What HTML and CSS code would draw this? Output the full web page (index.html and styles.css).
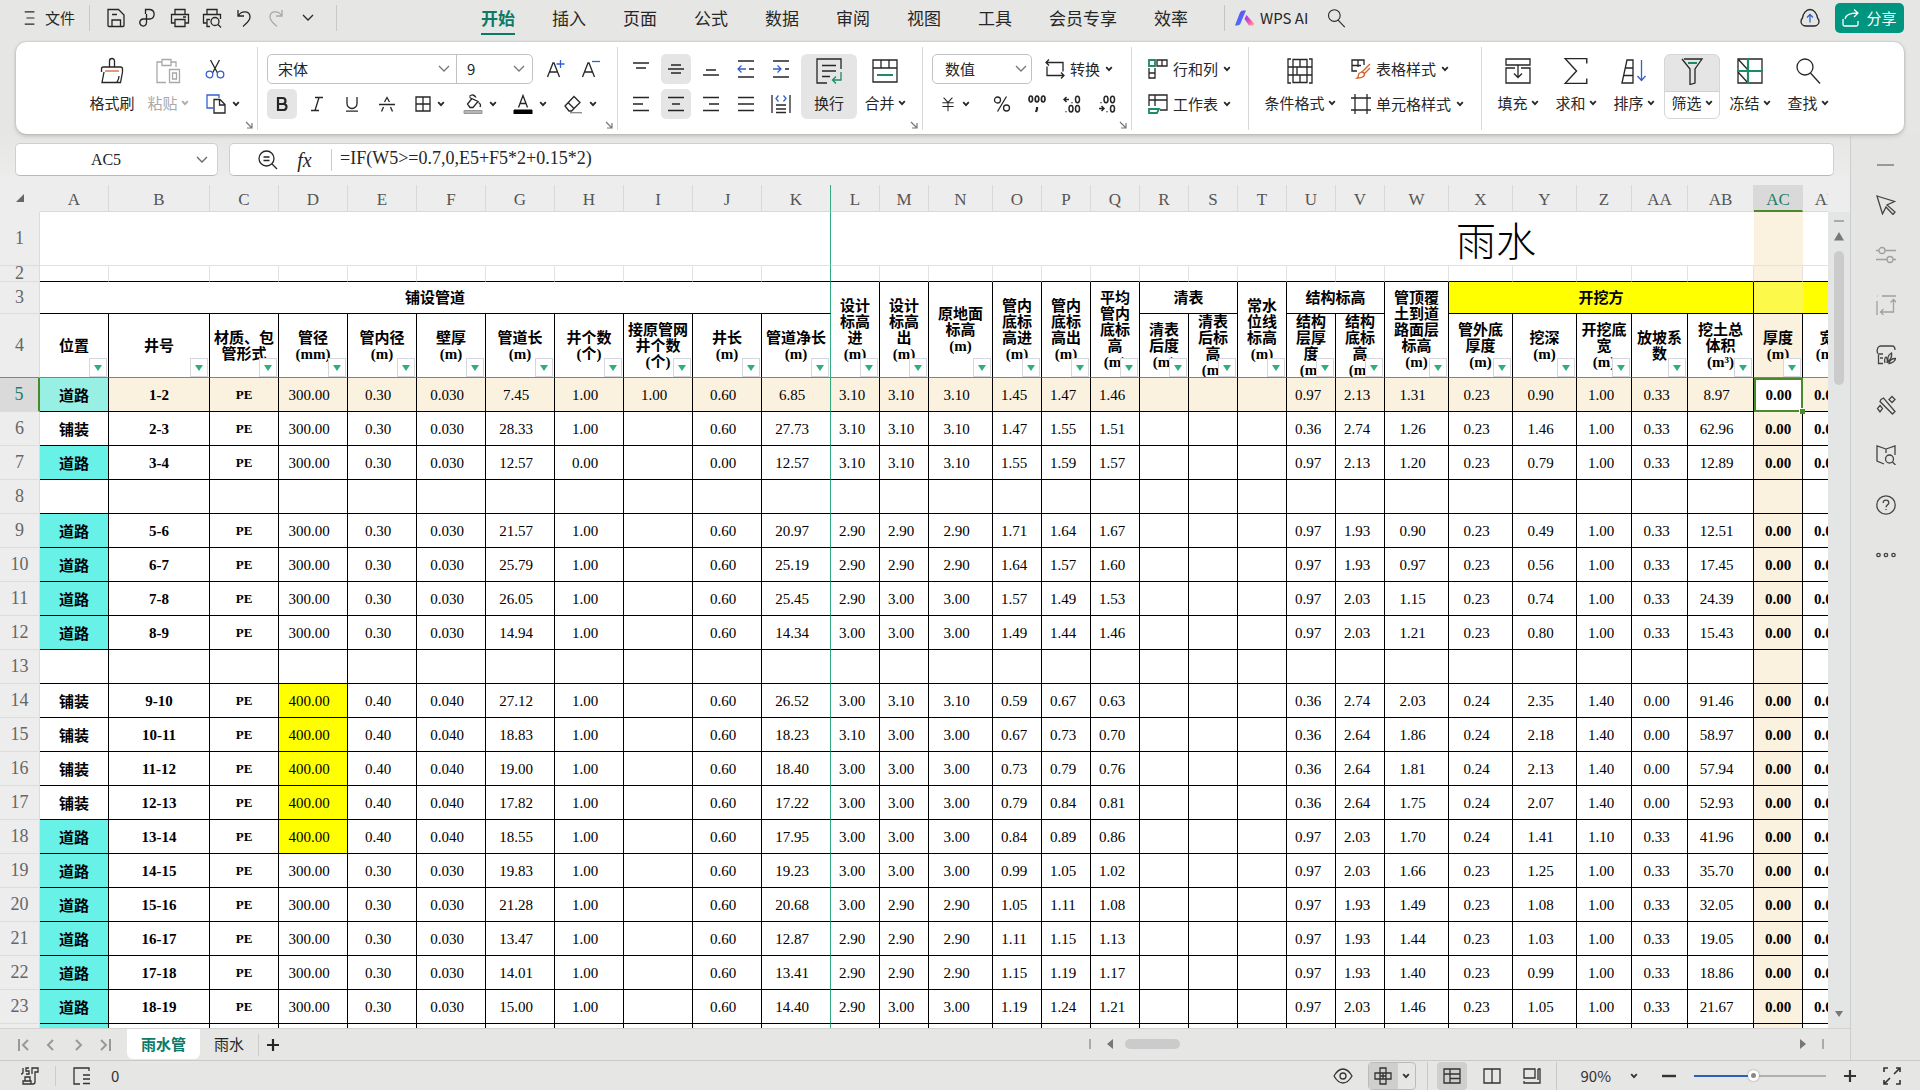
FILE: index.html
```html
<!DOCTYPE html>
<html lang="zh-CN">
<head>
<meta charset="utf-8">
<title>雨水管 - WPS 表格</title>
<link rel="stylesheet" href="styles.css">
</head>
<body>
<svg class="sprite" aria-hidden="true">
  <defs>
    <linearGradient id="ai-blue" x1="0" y1="0" x2="1" y2="1"><stop offset="0" stop-color="#7a3cf0"/><stop offset="1" stop-color="#2f8cff"/></linearGradient>
    <linearGradient id="ai-pink" x1="0" y1="0" x2="1" y2="1"><stop offset="0" stop-color="#8c2bf0"/><stop offset=".6" stop-color="#f25bb0"/><stop offset="1" stop-color="#ffb29a"/></linearGradient>
  </defs>
  <symbol id="chev" viewBox="0 0 8 6"><path d="M1.2 1.2 4 4.2 6.8 1.2" stroke-width="1.8"/></symbol>
  <symbol id="chev-thin" viewBox="0 0 12 8"><path d="M1 1l5 5 5-5"/></symbol>
  <symbol id="launch" viewBox="0 0 8 8"><path d="M1 1l6 6M7 2v5H2" stroke-width="1.2"/></symbol>
  <symbol id="menu" viewBox="0 0 12 16"><path d="M0 1h11M2 8h9M0 15h11"/></symbol>
  <symbol id="save" viewBox="0 0 20 20"><path d="M2 1.500h10.500l5.500 5.500v10.500a1 1 0 0 1-1 1H3a1 1 0 0 1-1-1zM6 18v-6h8.500v6M6 6.500h5"/></symbol>
  <symbol id="pdf" viewBox="0 0 20 20"><path d="M7.500 6V1.500h4.500a4.800 4.800 0 0 1 0 9.500H5a3.500 3.500 0 0 0-1.500 6.500C6 19 8.500 17 8.500 14.500V6"/></symbol>
  <symbol id="print" viewBox="0 0 20 20"><path d="M5 6V1.500h10V6M5 15H1.500V6.500h17V15H15M5 11.500h10v7H5zM13 9h3"/></symbol>
  <symbol id="preview" viewBox="0 0 20 20"><path d="M5 6V1.500h10V6M5 15H1.500V6.500h17V11M8 18.500H5v-7h3"/><circle cx="13" cy="13.500" r="4"/><path d="M16 16.500l3 3"/></symbol>
  <symbol id="undo" viewBox="0 0 20 20"><path d="M4 2v6h6M4.500 7.500C8 2 16 3 16 9c0 4-3 5.500-7 9.500"/></symbol>
  <symbol id="redo" viewBox="0 0 20 20"><path d="M16 2v6h-6M15.500 7.500C12 2 4 3 4 9c0 4 3 5.500 7 9.500"/></symbol>
  <symbol id="search" viewBox="0 0 24 24"><circle cx="10" cy="9" r="7"/><path d="M14.500 14.500l8 8.500"/></symbol>
  <symbol id="ai" viewBox="0 0 20 16"><path d="M0 15.500 5 2.500Q6 .5 8 .5h3L5.500 13.500Q4.700 15.500 2.500 15.500z" fill="url(#ai-blue)" stroke="none"/><path d="M11.500 5 19 13.500Q19.500 15.500 18 15.500h-4L9.500 9z" fill="url(#ai-pink)" stroke="none"/></symbol>
  <symbol id="cloud" viewBox="0 0 20 20"><path d="M5.500 18A4.600 4.600 0 0 1 1 13.500C1 12 1.500 11 2.500 10 3 5.500 6 1.500 10 1.500S17 5.500 17.500 10c1 1 1.500 2 1.500 3.500A4.600 4.600 0 0 1 14.500 18z"/><path d="M10 14.500V7M7 9.500 10 6.500l3 3" stroke="#3360d0"/></symbol>
  <symbol id="share" viewBox="0 0 18 18"><path d="M1 10v5.500q0 1.500 1.500 1.500h12q1.500 0 1.500-1.500V12M3 10c1-5 6-6 12-6M12 .5 16 4l-4 4"/></symbol>
  <symbol id="brush" viewBox="0 0 26 28"><path d="M10.500 10V4a2.500 2.500 0 0 1 5 0v6M2.500 15v-3q0-2 2-2h17q2 0 2 2v3M5 15 3 25.500h18.500L23.500 15M18 25q2-3 2-6"/><path d="M6 14h14" stroke="#d2622a"/></symbol>
  <symbol id="paste" viewBox="0 0 26 28"><path d="M7 5H2v20.500h9M16 5h5v5M7 2.500h9v6H7z"/><path d="M14.500 12.500h10v13h-10zM17.500 16h4v6h-4z"/></symbol>
  <symbol id="cut" viewBox="0 0 20 20"><path d="M5.500 1l7 13M14.500 1l-7 13"/><circle cx="4.500" cy="15.500" r="3.300" stroke="#3360d0"/><circle cx="15.500" cy="15.500" r="3.300" stroke="#3360d0"/></symbol>
  <symbol id="copy" viewBox="0 0 20 20"><path d="M13 4V1H1v13h6" stroke="#3360d0"/><path d="M8 5.500h6l5 5v8.500H8zM13.500 5.500v5.500H19"/></symbol>
  <symbol id="a-up" viewBox="0 0 20 20"><path d="M1.500 18 7 4h1l5.500 14M3.500 13h8"/><path d="M14.500 1v8M10.500 5h8" stroke="#3360d0"/></symbol>
  <symbol id="a-down" viewBox="0 0 20 20"><path d="M1.500 18 7 4h1l5.500 14M3.500 13h8"/><path d="M11 2.500h8" stroke="#3360d0"/></symbol>
  <symbol id="bold" viewBox="0 0 16 16"><path d="M4 2h4.500a3 3 0 0 1 0 6H4zM4 8h5.500a3 3 0 0 1 0 6H4z" stroke-width="2.200"/></symbol>
  <symbol id="italic" viewBox="0 0 16 16"><path d="M6 1.500h8M2 14.500h8M10 1.500 6 14.500"/></symbol>
  <symbol id="under" viewBox="0 0 16 16"><path d="M3 1v6.500a5 5 0 0 0 10 0V1M2 15.200h12"/></symbol>
  <symbol id="strike" viewBox="0 0 16 16"><path d="M0 8.500h16M5.500 6 8 1.500 10.500 6M4.500 11 2.500 15.500M11.500 11l2 4.500"/></symbol>
  <symbol id="border" viewBox="0 0 16 16"><path d="M1 1h14v14H1zM8 1v14M1 8h14"/></symbol>
  <symbol id="fill" viewBox="0 0 20 20"><path d="M6.500 2.500Q10-1 13 3.500M6.500 3.500 15 7.500l-5 6H7L4.500 10 9 4.500M15.500 8.500q3 2 1.500 4.500"/><path d="M1 16.500h18v3H1z" fill="#b5b5b5" stroke="#999" stroke-width="1"/></symbol>
  <symbol id="fcolor" viewBox="0 0 20 20"><path d="M5.500 13.500 10 1.500l4.500 12M7 9.500h6"/><path d="M1 16h18v4H1z" fill="#000" stroke="#000" stroke-width="1"/></symbol>
  <symbol id="eraser" viewBox="0 0 20 20"><path d="M2 12 11 2.500l6 6L8.500 17H6zM5 8.500l6 6"/><path d="M7 18.700h12" stroke="#888"/></symbol>
  <symbol id="al-top" viewBox="0 0 16 16"><path d="M0 2h16M3 7h10"/></symbol>
  <symbol id="al-mid" viewBox="0 0 16 16"><path d="M3 4h10M0 8h16M3 12h10"/></symbol>
  <symbol id="al-bot" viewBox="0 0 16 16"><path d="M3 9h10M0 14h16"/></symbol>
  <symbol id="ind-l" viewBox="0 0 18 18"><path d="M1 1h16M1 17h16M12 9h5"/><path d="M1 9h8M4.500 5.500 1 9l3.500 3.500" stroke="#3360d0"/></symbol>
  <symbol id="ind-r" viewBox="0 0 18 18"><path d="M1 1h16M1 17h16M13 9h4"/><path d="M1 9h8M5.500 5.500 9 9l-3.500 3.500" stroke="#3360d0"/></symbol>
  <symbol id="left" viewBox="0 0 16 16"><path d="M0 1.500h16M0 8h10M0 14.500h16"/></symbol>
  <symbol id="center" viewBox="0 0 16 16"><path d="M0 1.500h16M4 8h8M0 14.500h16"/></symbol>
  <symbol id="right" viewBox="0 0 16 16"><path d="M0 1.500h16M6 8h10M0 14.500h16"/></symbol>
  <symbol id="just" viewBox="0 0 16 16"><path d="M0 1.500h16M0 8h16M0 14.500h16"/></symbol>
  <symbol id="dist" viewBox="0 0 20 20"><path d="M1 1v18M19 1v18M5 11h10M5 15h10M5 18.500h10"/><path d="M7.500 1.500 5 4.500l2.500 3M12.500 1.500l2.500 3-2.500 3" stroke="#3360d0"/></symbol>
  <symbol id="wrap" viewBox="0 0 26 26"><path d="M11 25H1V1h24v10M6 7.500h14M6 13h14M6 18.500h8"/><path d="M25 14v8h-8M20 18.500 16.500 22l3.500 3.500" stroke="#1d8a68"/></symbol>
  <symbol id="merge" viewBox="0 0 26 24"><path d="M1 1h24v22H1zM1 9h24M9 1v8M17 1v8"/><path d="M5 16h16" stroke="#1d8a68" stroke-width="2"/></symbol>
  <symbol id="convert" viewBox="0 0 20 20"><path d="M4 .5 1 3.500l3 3M1 3.500h17v9M16 13.500l3 3-3 3M19 16.500H2v-9"/></symbol>
  <symbol id="yen" viewBox="0 0 16 20"><path d="M2.500 2 8 8l5.500-6M1 8.500h14M1 13h14M8 8v11"/></symbol>
  <symbol id="percent" viewBox="0 0 18 18"><circle cx="4.500" cy="5" r="3"/><circle cx="13.500" cy="13" r="3"/><path d="M13.500 1.500l-9 15"/></symbol>
  <symbol id="thousand" viewBox="0 0 18 18"><g stroke-width="1.700"><ellipse cx="2.800" cy="4" rx="1.800" ry="3"/><ellipse cx="9" cy="4" rx="1.800" ry="3"/><ellipse cx="15.200" cy="4" rx="1.800" ry="3"/><path d="M9 12v2l-1 3" stroke-width="2.200"/></g></symbol>
  <symbol id="dec-inc" viewBox="0 0 18 18"><g stroke-width="1.500"><path d="M1 4.500h5M3.500 2 1 4.500 3.500 7M9 7.200v1M3 16.200v1"/><ellipse cx="14.500" cy="4.500" rx="2" ry="3.200"/><ellipse cx="8" cy="13.800" rx="2" ry="3.200"/><ellipse cx="14.500" cy="13.800" rx="2" ry="3.200"/></g></symbol>
  <symbol id="dec-dec" viewBox="0 0 18 18"><g stroke-width="1.500"><path d="M1 13.500h5M3.500 11 6 13.500 3.500 16M3 7.200v1M9 16.200v1"/><ellipse cx="8" cy="4.500" rx="2" ry="3.200"/><ellipse cx="14.500" cy="4.500" rx="2" ry="3.200"/><ellipse cx="14.500" cy="13.800" rx="2" ry="3.200"/></g></symbol>
  <symbol id="rowcol" viewBox="0 0 20 20"><path d="M1 9v10h6V9M1 14h6M9 7V1h10v6zM14 1v6"/><path d="M1 1h6v6H1z" stroke="#1d8a68" stroke-width="1.800"/></symbol>
  <symbol id="sheet" viewBox="0 0 20 20"><path d="M1 12V1h18v15h-7M1 6h18M7 1v11"/><path d="M1 15h10l-2 4H1z" stroke="#1d8a68" stroke-width="1.800"/></symbol>
  <symbol id="cond" viewBox="0 0 26 26"><path d="M4 1H1v24h3M22 1h3v24h-3M6 1.500h14v23H6zM1 9h24M1 17h24M13 1.500V9M13 17v7.500M10 9v8"/></symbol>
  <symbol id="tstyle" viewBox="0 0 20 20"><path d="M6 12H1V1h12v5M1 6.500h9M7 1v7"/><path d="M19 5l-8 8M19 9l-6 6M10.500 13q3 0 3 3-1 3-7.500 3 1.500-1 1.500-3t3-3z" stroke="#d2622a"/></symbol>
  <symbol id="cstyle" viewBox="0 0 20 20"><path d="M4 0v20M16 0v20M0 4h20M0 16h20"/></symbol>
  <symbol id="fillin" viewBox="0 0 26 26"><path d="M1 7V1h24v6zM10 10H1v15h24V10h-9M13 7v12M9 15.500l4 4 4-4"/></symbol>
  <symbol id="sum" viewBox="0 0 24 26"><path d="M22 6V1.500H2L12.500 13 2 24.500h20V20"/></symbol>
  <symbol id="sort" viewBox="0 0 26 26"><path d="M1 25 6 2h6v23zM4.500 10H12M3 17.500h9"/><path d="M20.500 2v20M16.500 18l4 4.500 4-4.500" stroke="#3360d0"/></symbol>
  <symbol id="filter" viewBox="0 0 24 28"><path d="M4 2h18l-7 10v14l-5 1.500V12L2 2"/><path d="M8 6h9" stroke="#1d8a68" stroke-width="2"/></symbol>
  <symbol id="freeze" viewBox="0 0 26 26"><path d="M8 1H1v24h24V1H8M1 1l10 11M1 14l10 11"/><path d="M11 0v26M0 13h26" stroke="#1d8a68" stroke-width="2.200"/></symbol>
  <symbol id="find" viewBox="0 0 26 26"><circle cx="10" cy="9" r="8"/><path d="M15.500 15 25 25.500"/></symbol>
  <symbol id="zoomout" viewBox="0 0 20 20"><circle cx="8.500" cy="8.500" r="7.500"/><path d="M5.500 7h6M5.500 10.500h6M14 14l5 5"/></symbol>
  <symbol id="pointer" viewBox="0 0 20 20"><path d="M1 1l17.500 5.500-7.500 3.500 8 7-2 2.500-7-7.500-3.500 7z"/></symbol>
  <symbol id="sliders" viewBox="0 0 20 20"><circle cx="6" cy="5.500" r="3"/><circle cx="14" cy="14.500" r="3"/><path d="M0 5.500h3M9 5.500h11M0 14.500h11M17 14.500h3"/></symbol>
  <symbol id="rotate" viewBox="0 0 20 20"><path d="M1 6v14M6 1h14M1 1h.5M17.500 5v12H5M14.500 7.500l3-3 3 3M7.500 14l-3 3 3 3"/></symbol>
  <symbol id="leaf" viewBox="0 0 20 20"><path d="M7 18.500H2.500V9.500M2.500 9Q0 7 2 2.500 3 1 5 1h11q3 0 3 4M3 9h4M4 13h3M9 18q-1-5 1-6 2 2 1 6M12 17q-1-7 3.500-9 1 5-3.500 9zM13 18.500q1-5 6.500-5-.5 4-6.500 5z"/></symbol>
  <symbol id="wand" viewBox="0 0 20 20"><path d="M5 4.500 7.500 3 19 16.500 16.500 19 4 6.500zM4 10.500 6.500 13.500 4 17 1.500 13.500zM16 1.500 19 4.500 16 7.500 13 4.500z"/></symbol>
  <symbol id="book" viewBox="0 0 20 20"><path d="M10 4v4M10 4 1 1v15l7 3M10 4l9-3v9"/><circle cx="13.500" cy="14" r="4"/><path d="M16.500 17l3 3"/></symbol>
  <symbol id="help" viewBox="0 0 20 20"><circle cx="10" cy="10" r="9.200"/><path d="M7.200 8q0-2.800 2.800-2.800T12.800 8c0 1.800-2.800 2-2.800 4.200M10 14v1"/></symbol>
  <symbol id="dots" viewBox="0 0 20 20"><circle cx="2.500" cy="10" r="1.700"/><circle cx="10" cy="10" r="1.700"/><circle cx="17.500" cy="10" r="1.700"/></symbol>
  <symbol id="first" viewBox="0 0 12 12"><path d="M1 0v12M10 1 5 6l5 5" stroke-width="2"/></symbol>
  <symbol id="prev" viewBox="0 0 12 12"><path d="M8 1 3 6l5 5" stroke-width="2"/></symbol>
  <symbol id="next" viewBox="0 0 12 12"><path d="M4 1l5 5-5 5" stroke-width="2"/></symbol>
  <symbol id="last" viewBox="0 0 12 12"><path d="M11 0v12M2 1l5 5-5 5" stroke-width="2"/></symbol>
  <symbol id="plus" viewBox="0 0 12 12"><path d="M6 0v12M0 6h12" stroke-width="2.200"/></symbol>
  <symbol id="minus" viewBox="0 0 14 12"><path d="M0 6h14" stroke-width="2.400"/></symbol>
  <symbol id="js" viewBox="0 0 20 18"><path d="M3 1v4q0 2-2 2M9 1H6v3h3v3H6M12 7V1h6v4h-3v10q0 2-2 2H3v-3h8v3M5 14v-4h5v4"/></symbol>
  <symbol id="calc" viewBox="0 0 18 18"><path d="M16 4V1H1v16h6M10 8h7M10 12h7M10 16.500h7"/></symbol>
  <symbol id="eye" viewBox="0 0 20 16"><path d="M1 8q4-7 9-7t9 7q-4 7-9 7T1 8z"/><circle cx="10" cy="8" r="3"/></symbol>
  <symbol id="cross" viewBox="0 0 18 18"><path d="M6 6V1h6v16H6V6M6 6H1v6h16V6zM9 6v6M6 9h6"/></symbol>
  <symbol id="v-normal" viewBox="0 0 18 16"><path d="M1 1h16v14H1zM1 6h16M7 1v14M7 10.500h10"/></symbol>
  <symbol id="v-page" viewBox="0 0 18 16"><path d="M1 1h16v14H1zM9 1v14"/></symbol>
  <symbol id="v-layout" viewBox="0 0 18 16"><path d="M1 1h11v9H1zM15 1h2v14H1v-2M15 1v11"/></symbol>
  <symbol id="full" viewBox="0 0 18 18"><path d="M1 5V1h4M1 13v4h4M13 1h4v4M17 13v4h-4M17 1l-6 6M1 17l6-6" stroke-width="1.600"/></symbol>
  <symbol id="tri" viewBox="0 0 10 10"><path d="M0 9.500h10L5 1z" fill="currentColor" stroke="none"/></symbol>
  <symbol id="tri-down" viewBox="0 0 8 6"><path d="M0 0h8L4 6z" fill="currentColor" stroke="none"/></symbol>
  <symbol id="tri-left" viewBox="0 0 6 10"><path d="M6 0v10L0 5z" fill="currentColor" stroke="none"/></symbol>
  <symbol id="tri-right" viewBox="0 0 6 10"><path d="M0 0v10l6-5z" fill="currentColor" stroke="none"/></symbol>
</svg>

<header class="topbar">
  <button class="file"><svg class="i w12"><use href="#menu"/></svg>文件</button>
  <div class="quick">
    <button aria-label="保存"><svg class="i"><use href="#save"/></svg></button>
    <button aria-label="输出PDF"><svg class="i"><use href="#pdf"/></svg></button>
    <button aria-label="打印"><svg class="i"><use href="#print"/></svg></button>
    <button aria-label="打印预览"><svg class="i"><use href="#preview"/></svg></button>
    <button aria-label="撤销"><svg class="i"><use href="#undo"/></svg></button>
    <button aria-label="恢复" class="off"><svg class="i"><use href="#redo"/></svg></button>
    <button aria-label="更多"><svg class="i w12"><use href="#chev-thin"/></svg></button>
  </div>
  <nav class="menu">
    <button class="on">开始</button><button>插入</button><button>页面</button><button>公式</button><button>数据</button><button>审阅</button><button>视图</button><button>工具</button><button>会员专享</button><button>效率</button>
  </nav>
  <div class="ai">
    <button><svg class="i"><use href="#ai"/></svg>WPS AI</button>
    <button aria-label="搜索"><svg class="i"><use href="#search"/></svg></button>
  </div>
  <div class="account">
    <button aria-label="云同步"><svg class="i"><use href="#cloud"/></svg></button>
    <button class="share"><svg class="i"><use href="#share"/></svg>分享</button>
  </div>
</header>

<section class="ribbon">
  <div class="group g-clip">
    <button class="big"><svg class="i"><use href="#brush"/></svg><span>格式刷</span></button>
    <button class="big off"><svg class="i"><use href="#paste"/></svg><span>粘贴<svg class="c"><use href="#chev"/></svg></span></button>
    <div class="stack clipstack">
      <div class="line"><button class="sq" aria-label="剪切"><svg class="i"><use href="#cut"/></svg></button></div>
      <div class="line"><button class="split" aria-label="复制"><svg class="i"><use href="#copy"/></svg><svg class="c"><use href="#chev"/></svg></button></div>
    </div>
    <button class="launch" aria-label="剪贴板"><svg class="c"><use href="#launch"/></svg></button>
  </div>
  <div class="group g-font">
    <div class="stack">
      <div class="line">
        <div class="combo"><select class="font" aria-label="字体"><option>宋体</option></select><select class="size" aria-label="字号"><option>9</option></select></div>
        <button class="sq" aria-label="增大字号"><svg class="i"><use href="#a-up"/></svg></button>
        <button class="sq" aria-label="减小字号"><svg class="i"><use href="#a-down"/></svg></button>
      </div>
      <div class="line">
        <button class="sq on" aria-label="加粗"><svg class="i s16"><use href="#bold"/></svg></button>
        <button class="sq" aria-label="倾斜"><svg class="i s16"><use href="#italic"/></svg></button>
        <button class="sq" aria-label="下划线"><svg class="i s16"><use href="#under"/></svg></button>
        <button class="sq" aria-label="删除线"><svg class="i s16"><use href="#strike"/></svg></button>
        <button class="split" aria-label="边框"><svg class="i s16"><use href="#border"/></svg><svg class="c"><use href="#chev"/></svg></button>
        <button class="split" aria-label="填充颜色"><svg class="i"><use href="#fill"/></svg><svg class="c"><use href="#chev"/></svg></button>
        <button class="split" aria-label="字体颜色"><svg class="i"><use href="#fcolor"/></svg><svg class="c"><use href="#chev"/></svg></button>
        <button class="split" aria-label="清除"><svg class="i"><use href="#eraser"/></svg><svg class="c"><use href="#chev"/></svg></button>
      </div>
    </div>
    <button class="launch" aria-label="字体设置"><svg class="c"><use href="#launch"/></svg></button>
  </div>
  <div class="group g-align">
    <div class="stack">
      <div class="line">
        <button class="sq" aria-label="顶端对齐"><svg class="i s16"><use href="#al-top"/></svg></button>
        <button class="sq on" aria-label="垂直居中"><svg class="i s16"><use href="#al-mid"/></svg></button>
        <button class="sq" aria-label="底端对齐"><svg class="i s16"><use href="#al-bot"/></svg></button>
        <button class="sq" aria-label="减少缩进"><svg class="i s18"><use href="#ind-l"/></svg></button>
        <button class="sq" aria-label="增加缩进"><svg class="i s18"><use href="#ind-r"/></svg></button>
      </div>
      <div class="line">
        <button class="sq" aria-label="左对齐"><svg class="i s16"><use href="#left"/></svg></button>
        <button class="sq on" aria-label="水平居中"><svg class="i s16"><use href="#center"/></svg></button>
        <button class="sq" aria-label="右对齐"><svg class="i s16"><use href="#right"/></svg></button>
        <button class="sq" aria-label="两端对齐"><svg class="i s16"><use href="#just"/></svg></button>
        <button class="sq" aria-label="分散对齐"><svg class="i"><use href="#dist"/></svg></button>
      </div>
    </div>
    <button class="big on wrapbtn"><svg class="i"><use href="#wrap"/></svg><span>换行</span></button>
    <button class="big"><svg class="i"><use href="#merge"/></svg><span>合并<svg class="c"><use href="#chev"/></svg></span></button>
    <button class="launch" aria-label="对齐设置"><svg class="c"><use href="#launch"/></svg></button>
  </div>
  <div class="group g-num">
    <div class="stack">
      <div class="line"><select class="numfmt" aria-label="数字格式"><option>数值</option></select><button class="txt"><svg class="i"><use href="#convert"/></svg>转换<svg class="c"><use href="#chev"/></svg></button></div>
      <div class="line">
        <button class="split wide" aria-label="货币"><svg class="i s16"><use href="#yen"/></svg><svg class="c"><use href="#chev"/></svg></button>
        <button class="sq" aria-label="百分比"><svg class="i s18"><use href="#percent"/></svg></button>
        <button class="sq" aria-label="千位分隔"><svg class="i s18"><use href="#thousand"/></svg></button>
        <button class="sq" aria-label="增加小数位"><svg class="i s18"><use href="#dec-inc"/></svg></button>
        <button class="sq" aria-label="减少小数位"><svg class="i s18"><use href="#dec-dec"/></svg></button>
      </div>
    </div>
    <button class="launch" aria-label="数字设置"><svg class="c"><use href="#launch"/></svg></button>
  </div>
  <div class="group g-rows">
    <div class="stack">
      <div class="line"><button class="txt"><svg class="i"><use href="#rowcol"/></svg>行和列<svg class="c"><use href="#chev"/></svg></button></div>
      <div class="line"><button class="txt"><svg class="i"><use href="#sheet"/></svg>工作表<svg class="c"><use href="#chev"/></svg></button></div>
    </div>
  </div>
  <div class="group g-style">
    <button class="big broad"><svg class="i"><use href="#cond"/></svg><span>条件格式<svg class="c"><use href="#chev"/></svg></span></button>
    <div class="stack">
      <div class="line"><button class="txt"><svg class="i"><use href="#tstyle"/></svg>表格样式<svg class="c"><use href="#chev"/></svg></button></div>
      <div class="line"><button class="txt"><svg class="i"><use href="#cstyle"/></svg>单元格样式<svg class="c"><use href="#chev"/></svg></button></div>
    </div>
  </div>
  <div class="group g-edit">
    <button class="big"><svg class="i"><use href="#fillin"/></svg><span>填充<svg class="c"><use href="#chev"/></svg></span></button>
    <button class="big"><svg class="i"><use href="#sum"/></svg><span>求和<svg class="c"><use href="#chev"/></svg></span></button>
    <button class="big"><svg class="i"><use href="#sort"/></svg><span>排序<svg class="c"><use href="#chev"/></svg></span></button>
    <button class="big half"><svg class="i"><use href="#filter"/></svg><span>筛选<svg class="c"><use href="#chev"/></svg></span></button>
    <button class="big"><svg class="i"><use href="#freeze"/></svg><span>冻结<svg class="c"><use href="#chev"/></svg></span></button>
    <button class="big"><svg class="i"><use href="#find"/></svg><span>查找<svg class="c"><use href="#chev"/></svg></span></button>
  </div>
</section>

<main class="work">
  <div class="book">
    <div class="fbar">
      <div class="namebox"><input value="AC5" aria-label="名称框"><svg class="i w12"><use href="#chev-thin"/></svg></div>
      <div class="formula">
        <button aria-label="缩小"><svg class="i"><use href="#zoomout"/></svg></button>
        <button class="fx">fx</button>
        <input value="=IF(W5&gt;=0.7,0,E5+F5*2+0.15*2)" aria-label="编辑栏">
      </div>
    </div>
    <div class="gridwrap">
      <div class="grid"><table id="sheet-table"></table></div>
      <div class="vscroll"><span class="dash"></span><svg class="i s10"><use href="#tri"/></svg><span class="thumb"></span><svg class="i s8"><use href="#tri-down"/></svg></div>
    </div>
    <div class="tabs">
      <div class="pager">
        <button aria-label="第一张"><svg class="i w12"><use href="#first"/></svg></button><button aria-label="上一张"><svg class="i w12"><use href="#prev"/></svg></button><button aria-label="下一张"><svg class="i w12"><use href="#next"/></svg></button><button aria-label="最后一张"><svg class="i w12"><use href="#last"/></svg></button>
      </div>
      <button class="tab on">雨水管</button><button class="tab">雨水</button>
      <button class="add" aria-label="新建工作表"><svg class="i w12"><use href="#plus"/></svg></button>
      <div class="hscroll"><svg class="i"><use href="#tri-left"/></svg><span class="hthumb"></span><svg class="i end"><use href="#tri-right"/></svg></div>
    </div>
  </div>
  <aside class="side">
    <span class="dash"></span>
    <button aria-label="选择"><svg class="i"><use href="#pointer"/></svg></button>
    <button aria-label="属性" class="off"><svg class="i"><use href="#sliders"/></svg></button>
    <button aria-label="对象" class="off"><svg class="i"><use href="#rotate"/></svg></button>
    <button aria-label="素材"><svg class="i"><use href="#leaf"/></svg></button>
    <button aria-label="工具"><svg class="i"><use href="#wand"/></svg></button>
    <button aria-label="查阅"><svg class="i"><use href="#book"/></svg></button>
    <button aria-label="帮助"><svg class="i"><use href="#help"/></svg></button>
    <button aria-label="更多"><svg class="i"><use href="#dots"/></svg></button>
  </aside>
</main>

<footer class="status">
  <button class="js" aria-label="宏"><svg class="i"><use href="#js"/></svg></button>
  <button class="sumbtn"><svg class="i s18"><use href="#calc"/></svg>0</button>
  <div class="views">
    <button aria-label="护眼"><svg class="i"><use href="#eye"/></svg></button>
    <button class="reading" aria-label="阅读模式"><span><svg class="i s18"><use href="#cross"/></svg></span><svg class="c"><use href="#chev"/></svg></button>
    <div class="modes">
      <button class="on" aria-label="普通视图"><svg class="i s18"><use href="#v-normal"/></svg></button>
      <button aria-label="分页预览"><svg class="i s18"><use href="#v-page"/></svg></button>
      <button aria-label="页面布局"><svg class="i s18"><use href="#v-layout"/></svg></button>
    </div>
    <button class="zoom">90%<svg class="c"><use href="#chev"/></svg></button>
    <button aria-label="缩小"><svg class="i s14"><use href="#minus"/></svg></button>
    <input type="range" min="0" max="100" value="45" aria-label="缩放">
    <button aria-label="放大"><svg class="i w12"><use href="#plus"/></svg></button>
    <button class="full" aria-label="全屏"><svg class="i s18"><use href="#full"/></svg></button>
  </div>
</footer>
<script src="script.js"></script>
</body>
</html>
```
FILE: styles.css
```css
* { box-sizing: border-box; }
body {
  margin: 0; height: 100vh; display: flex; flex-direction: column; overflow: hidden;
  background: #e6e6e4; color: #262626;
  font: 15px/20px "Noto Sans CJK SC", sans-serif;
}
button, input, select { font: inherit; color: inherit; border: 0; background: none; padding: 0; margin: 0; outline: 0; }
button { display: flex; align-items: center; justify-content: center; white-space: nowrap; }
.sprite { position: absolute; width: 0; height: 0; }
.i { width: 20px; height: 20px; flex: none; fill: none; stroke: currentColor; stroke-width: 1.3; color: inherit; }
.c { width: 8px; height: 8px; flex: none; fill: none; stroke: currentColor; }
.s18 { width: 18px; height: 18px; }
.s16 { width: 16px; height: 16px; }
.s14 { width: 14px; height: 14px; }
.w12 { width: 12px; height: 14px; }
.s10 { width: 10px; height: 10px; }
.s8 { width: 8px; height: 8px; }
.off { color: #a9a9a9; }

/* top bar */
.topbar { display: flex; align-items: center; height: 42px; padding: 0 16px 6px 24px; flex: none; }
.file { gap: 9px; padding-right: 14px; border-right: 1px solid #c9c9c7; height: 26px; }
.quick { display: flex; gap: 12px; padding: 0 18px 0 16px; border-right: 1px solid #c9c9c7; height: 26px; }
.quick button { width: 20px; }
.menu { display: flex; gap: 37px; margin-left: 144px; padding-right: 36px; border-right: 1px solid #c4c4c2; height: 26px; font-size: 17px; }
.menu button { position: relative; }
.menu .on { color: #0d7a68; font-weight: 700; }
.menu .on::after { content: ""; position: absolute; left: 0; right: 0; bottom: -4px; height: 2px; background: #0d7a68; }
.ai { display: flex; gap: 18px; padding-left: 10px; }
.ai button { gap: 5px; }
.account { display: flex; gap: 15px; margin-left: auto; align-items: center; }
.share { width: 69px; height: 30px; gap: 6px; border-radius: 5px; background: #00957f; color: #fff; }
.share .i { width: 18px; height: 18px; }

/* ribbon */
.ribbon { display: flex; flex: none; margin: 0 16px; padding: 5px 0 4px; background: #fff; border-radius: 10px; box-shadow: 0 0 2px #a8a8a8, 0 2px 4px #bdbdbb; position: relative; z-index: 1; }
.group { position: relative; display: flex; height: 83px; padding-top: 7px; flex: none; }
.group + .group { border-left: 1px solid #d8d8d8; }
.g-clip { width: 241px; padding-left: 68px; }
.g-font { width: 360px; padding-left: 9px; }
.g-align { width: 305px; padding-left: 8px; }
.g-num { width: 209px; padding-left: 9px; }
.g-rows { width: 117px; padding-left: 11px; }
.g-style { width: 233px; padding-left: 15px; }
.g-edit { flex: 1; padding-left: 8px; gap: 2px; }
.stack { display: flex; flex-direction: column; gap: 5px; }
.clipstack { margin-left: 4px; }
.line { display: flex; gap: 5px; height: 30px; align-items: center; }
.sq { width: 30px; height: 30px; border-radius: 5px; }
.on.sq, .on.big { background: #e5e5e5; }
.split { width: 45px; height: 30px; gap: 6px; }
.wide { width: 50px; padding-right: 5px; }
.txt { gap: 5px; height: 30px; padding: 0 5px; }
.big { width: 56px; height: 65px; flex-direction: column; justify-content: flex-start; border-radius: 6px; padding-top: 3px; gap: 8px; flex: none; }
.big .i { width: 26px; height: 28px; }
.big span { display: flex; align-items: center; gap: 3px; }
.broad { width: 72px; margin-right: 10px; }
.wrapbtn { margin-left: 5px; }
.half { border: 1px solid #d6d6d6; padding-top: 2px; background: linear-gradient(#e5e5e5 36px, #cfcfcf 36px, #cfcfcf 37px, #fff 37px); }
.launch { position: absolute; right: 4px; bottom: 1px; width: 8px; height: 8px; color: #777; }
select { appearance: none; height: 30px; padding: 0 12px; background: url("data:image/svg+xml,%3Csvg xmlns='http://www.w3.org/2000/svg' width='12' height='8'%3E%3Cpath d='M1 1l5 5 5-5' fill='none' stroke='%23777' stroke-width='1.300'/%3E%3C/svg%3E") no-repeat right 6px center; }
.combo { display: flex; width: 266px; border: 1px solid #c2c2c2; border-radius: 5px; height: 30px; margin-right: 3px; }
.combo select { height: 28px; padding: 0 10px; }
.font { width: 188px; }
.size { flex: 1; border-left: 1px solid #c2c2c2; background-position: right 7px center; }
.numfmt { width: 100px; border: 1px solid #c2c2c2; border-radius: 5px; margin-right: 3px; background-position: right 4px center; }

/* workspace */
.work { display: flex; flex: 1; min-height: 0; }
.book { display: flex; flex-direction: column; flex: 1; min-width: 0; background: linear-gradient(#e6e6e4, #ededed 50px); }
.fbar { display: flex; gap: 11px; padding: 9px 16px 9px 15px; flex: none; }
.namebox, .formula { display: flex; align-items: center; height: 33px; background: #fff; border: 1px solid #cfcfcf; border-bottom-color: #b8b8b8; border-radius: 5px; }
.namebox { width: 203px; padding-right: 8px; color: #666; font: 16px/20px "Liberation Serif", serif; }
.namebox input { width: 180px; text-align: center; color: #222; }
.formula { flex: 1; padding-left: 28px; }
.fx { font: italic 20px/20px "Liberation Serif", serif; width: 54px; height: 22px; border-right: 1px solid #ccc; }
.formula input { flex: 1; padding-left: 8px; font: 18px/20px "Liberation Serif", serif; height: 24px; margin-bottom: 3px; }
.gridwrap { display: flex; flex: 1; min-height: 0; }
.grid { flex: 1; min-width: 0; overflow: hidden; }
table { border-collapse: separate; border-spacing: 0; table-layout: fixed; width: max-content; color: #000; font: 15px/16px "Liberation Serif", "Noto Sans CJK SC", serif; }
th, td { padding: 0; border-right: 1px solid #000; border-bottom: 1px solid #000; text-align: center; vertical-align: middle; overflow: hidden; white-space: nowrap; background: #fff; }
.cols th { height: 27px; background: #ededed; border-color: #d9d9d9; font-weight: 400; font-size: 17px; color: #555; padding-top: 4px; }
.cols .cur { background: #d9d9d9; color: #1e7d6c; border-bottom: 2px solid #4a8a28; }
.corner { text-align: right; }
th.corner { border-right-color: transparent; border-bottom-color: transparent; }
.corner svg { display: block; margin: 0 15px 4px auto; width: 8px; height: 8px; color: #666; }
.rn { background: #ededed; border-color: #dcdcdc; font-weight: 400; font-size: 18px; line-height: 15px; color: #666; }
.cur .rn { background: #dadada; color: #1e7d6c; border-right: 2px solid #4a8a28; }
.r1 { height: 54px; } .r2 { height: 16px; } .r3 { height: 32px; } .r4 { height: 64px; } .r { height: 34px; }
.r1 td { border-color: #e2e2e2; border-right: 0; }
.r1 td.fz { border-right: 1px solid #32ab80; }
.r2 td { border-right-color: #e2e2e2; }
.title { font: 300 40px/50px "Noto Sans CJK SC", sans-serif; }
.head { font: 700 15px/16px "Liberation Serif", "Noto Sans CJK SC", serif; position: relative; }
.r4 .rn, td.bz, .r4 td { border-bottom-color: #32ab80; }
.head div { overflow: hidden; max-height: 63px; }
.head.tall div { max-height: 95px; }
.flt { position: absolute; right: 1px; bottom: 0; width: 18px; height: 19px; background: #fff; border: 1px solid #d6d6de; color: #2eae7e; }
.flt .i { width: 8px; height: 6px; }
.num { padding-right: 8px; }
.narrow { padding-right: 6px; }
.b { font-weight: 700; }
.cn { font: 700 15px/16px "Noto Sans CJK SC", sans-serif; }
.pe { font-size: 13px; font-weight: 700; }
.road { background: #68f1e7; }
td.hl, .cur td { background: #fbf1df; }
.cur td.road { background: #98f0e5; }
td.yel { background: #ff0; }
td.yel.hl { background: #fdf94a; border-right: 0; }
.grid td.fz, .grid th.fz { border-right-color: #32ab80; }
.cur td.active { background: #fff; border: 2px solid #4a8a28; position: relative; overflow: visible; z-index: 1; }
.active::after { content: ""; position: absolute; right: -4px; bottom: -4px; width: 5px; height: 5px; background: #4a8a28; border: solid #fff; border-width: 1px 0 0 1px; box-sizing: content-box; }
.vscroll { width: 22px; margin-top: 27px; background: #e4e5e5; display: flex; flex-direction: column; align-items: center; padding: 8px 0 10px; color: #777; flex: none; }
.dash { width: 10px; height: 2px; background: #aaa; }
.vscroll .s10 { margin-top: 9px; }
.thumb { width: 10px; height: 134px; border-radius: 5px; background: #cbcbcb; margin-top: 10px; margin-bottom: auto; }

/* sheet tabs */
.tabs { display: flex; height: 32px; flex: none; background: #e6e6e4; border-top: 1px solid #d4d4d4; padding-left: 18px; }
.pager { display: flex; gap: 15px; color: #999; width: 109px; }
.tab { padding: 0 14px; height: 30px; }
.tab.on { background: #fff; color: #0d7a68; font-weight: 700; border-radius: 0 0 6px 6px; }
.add { padding: 0 8px; border-left: 1px solid #ccc; height: 22px; align-self: center; }
.hscroll { display: flex; align-items: center; gap: 12px; width: 735px; height: 10px; margin: 10px 26px 0 auto; padding: 0 16px; border: solid #aaa; border-width: 0 2px; color: #777; }
.hscroll .i { width: 6px; height: 10px; }
.hthumb { width: 55px; height: 10px; border-radius: 5px; background: #cbcbcb; }
.hscroll .end { margin-left: auto; }

/* side panel */
.side { width: 70px; border-left: 1px solid #cdcdcd; background: #e5e5e4; display: flex; flex-direction: column; align-items: center; padding-top: 30px; gap: 30px; color: #444; flex: none; }
.side .dash { width: 17px; background: #999; margin-bottom: -1px; }
.side .off { color: #a0a0a0; }

/* status bar */
.status { display: flex; align-items: center; height: 30px; flex: none; border-top: 1px solid #c9c9c9; padding: 0 19px 0 20px; color: #333; }
.js { padding-right: 15px; border-right: 1px solid #ccc; }
.sumbtn { padding-left: 17px; gap: 20px; }
.views { display: flex; align-items: center; margin-left: auto; height: 29px; }
.reading { width: 48px; height: 28px; margin-left: 15px; border: 1px solid #bbb; border-radius: 4px; gap: 4px; justify-content: flex-start; }
.reading span { width: 29px; height: 100%; background: #cfcfcd; display: flex; align-items: center; justify-content: center; }
.modes { display: flex; gap: 10px; margin-left: 11px; padding: 0 9px; border: solid #c9c9c7; border-width: 0 1px; }
.modes button { width: 30px; height: 28px; border-radius: 4px; }
.modes .on { background: #cfcfcd; }
.zoom { padding: 0 24px; gap: 19px; }
.views input { appearance: none; width: 132px; height: 2px; margin: 0 18px; background: linear-gradient(90deg, #2a5fb8 45%, #b0b0b0 45%); }
.views input::-webkit-slider-thumb { appearance: none; width: 11px; height: 11px; border-radius: 50%; background: #888; border: 3px solid #fff; box-shadow: 0 0 2px #888; }
.full { margin-left: 27px; }
```
FILE: script.js
```js
const cols = 'A B C D E F G H I J K L M N O P Q R S T U V W X Y Z AA AB AC AD'.split(' ');
const widths = [69, 101, 69, 69, 69, 69, 69, 69, 69, 69, 69, 49, 49, 64, 49, 49, 49, 49, 49, 49, 49, 49, 64, 64, 64, 55, 56, 66, 49, 49];
const FROZEN = 10, CURRENT = 28;

// place, well, diameter, inner, wall, length, wells, joined, well length, net length, L..Q, U..AB
const data = `道路 1-2 300.00 0.30 0.030 7.45 1.00 1.00 0.60 6.85 3.10 3.10 3.10 1.45 1.47 1.46 0.97 2.13 1.31 0.23 0.90 1.00 0.33 8.97
铺装 2-3 300.00 0.30 0.030 28.33 1.00 _ 0.60 27.73 3.10 3.10 3.10 1.47 1.55 1.51 0.36 2.74 1.26 0.23 1.46 1.00 0.33 62.96
道路 3-4 300.00 0.30 0.030 12.57 0.00 _ 0.00 12.57 3.10 3.10 3.10 1.55 1.59 1.57 0.97 2.13 1.20 0.23 0.79 1.00 0.33 12.89

道路 5-6 300.00 0.30 0.030 21.57 1.00 _ 0.60 20.97 2.90 2.90 2.90 1.71 1.64 1.67 0.97 1.93 0.90 0.23 0.49 1.00 0.33 12.51
道路 6-7 300.00 0.30 0.030 25.79 1.00 _ 0.60 25.19 2.90 2.90 2.90 1.64 1.57 1.60 0.97 1.93 0.97 0.23 0.56 1.00 0.33 17.45
道路 7-8 300.00 0.30 0.030 26.05 1.00 _ 0.60 25.45 2.90 3.00 3.00 1.57 1.49 1.53 0.97 2.03 1.15 0.23 0.74 1.00 0.33 24.39
道路 8-9 300.00 0.30 0.030 14.94 1.00 _ 0.60 14.34 3.00 3.00 3.00 1.49 1.44 1.46 0.97 2.03 1.21 0.23 0.80 1.00 0.33 15.43

铺装 9-10 400.00 0.40 0.040 27.12 1.00 _ 0.60 26.52 3.00 3.10 3.10 0.59 0.67 0.63 0.36 2.74 2.03 0.24 2.35 1.40 0.00 91.46
铺装 10-11 400.00 0.40 0.040 18.83 1.00 _ 0.60 18.23 3.10 3.00 3.00 0.67 0.73 0.70 0.36 2.64 1.86 0.24 2.18 1.40 0.00 58.97
铺装 11-12 400.00 0.40 0.040 19.00 1.00 _ 0.60 18.40 3.00 3.00 3.00 0.73 0.79 0.76 0.36 2.64 1.81 0.24 2.13 1.40 0.00 57.94
铺装 12-13 400.00 0.40 0.040 17.82 1.00 _ 0.60 17.22 3.00 3.00 3.00 0.79 0.84 0.81 0.36 2.64 1.75 0.24 2.07 1.40 0.00 52.93
道路 13-14 400.00 0.40 0.040 18.55 1.00 _ 0.60 17.95 3.00 3.00 3.00 0.84 0.89 0.86 0.97 2.03 1.70 0.24 1.41 1.10 0.33 41.96
道路 14-15 300.00 0.30 0.030 19.83 1.00 _ 0.60 19.23 3.00 3.00 3.00 0.99 1.05 1.02 0.97 2.03 1.66 0.23 1.25 1.00 0.33 35.70
道路 15-16 300.00 0.30 0.030 21.28 1.00 _ 0.60 20.68 3.00 2.90 2.90 1.05 1.11 1.08 0.97 1.93 1.49 0.23 1.08 1.00 0.33 32.05
道路 16-17 300.00 0.30 0.030 13.47 1.00 _ 0.60 12.87 2.90 2.90 2.90 1.11 1.15 1.13 0.97 1.93 1.44 0.23 1.03 1.00 0.33 19.05
道路 17-18 300.00 0.30 0.030 14.01 1.00 _ 0.60 13.41 2.90 2.90 2.90 1.15 1.19 1.17 0.97 1.93 1.40 0.23 0.99 1.00 0.33 18.86
道路 18-19 300.00 0.30 0.030 15.00 1.00 _ 0.60 14.40 2.90 3.00 3.00 1.19 1.24 1.21 0.97 2.03 1.46 0.23 1.05 1.00 0.33 21.67
道路`.split('\n');

const mark = i => (i === FROZEN ? ' fz' : '') + (i === CURRENT ? ' hl' : '');
const head = (i, text, tall) =>
  `<td class="head${tall ? ' tall bz' : ''}${mark(i)}"${tall ? ' rowspan="2"' : ''}><div>${text.replace(/\|/g, '<br>')}</div>` +
  `<button class="flt" aria-label="筛选"><svg class="i"><use href="#tri-down"/></svg></button></td>`;

let html = '<colgroup><col style="width:40px">' + widths.map(w => `<col style="width:${w}px">`).join('') + '</colgroup>';
html += '<tr class="cols"><th class="corner"><svg viewBox="0 0 8 8"><path d="M8 0v8H0z" fill="currentColor"/></svg></th>' +
  cols.map((c, i) => `<th class="${i === FROZEN ? 'fz' : ''}${i === CURRENT ? 'cur' : ''}">${c}</th>`).join('') + '</tr>';
html += '<tr class="r1"><th class="rn">1</th><td colspan="11" class="fz"></td><td colspan="8"></td><td colspan="9" class="title">雨水</td><td class="hl"></td><td></td></tr>';
html += '<tr class="r2"><th class="rn">2</th>' + cols.map((c, i) => `<td class="${mark(i)}"></td>`).join('') + '</tr>';
html += '<tr class="r3"><th class="rn">3</th><td class="head fz" colspan="11">铺设管道</td>' +
  ['设计|标高|进|(m)', '设计|标高|出|(m)', '原地面|标高|(m)', '管内|底标|高进|(m)', '管内|底标|高出|(m)', '平均|管内|底标|高|(m)'].map((t, k) => head(11 + k, t, true)).join('') +
  '<td class="head" colspan="2">清表</td>' + head(19, '常水|位线|标高|(m)', true) +
  '<td class="head" colspan="2">结构标高</td>' + head(22, '管顶覆|土到道|路面层|标高|(m)', true) +
  '<td class="head yel" colspan="5">开挖方</td><td class="yel hl"></td><td class="yel"></td></tr>';
html += '<tr class="r4"><th class="rn">4</th>' +
  [[0, '位置'], [1, '井号'], [2, '材质、包|管形式'], [3, '管径|(mm)'], [4, '管内径|(m)'], [5, '壁厚|(m)'], [6, '管道长|(m)'], [7, '井个数|(个)'],
   [8, '接原管网|井个数|(个)'], [9, '井长|(m)'], [10, '管道净长|(m)'], [17, '清表|后度|(m)'], [18, '清表|后标|高|(m)'], [20, '结构|层厚|度|(m)'],
   [21, '结构|底标|高|(m)'], [23, '管外底|厚度|(m)'], [24, '挖深|(m)'], [25, '开挖底|宽|(m)'], [26, '放坡系|数'], [27, '挖土总|体积|(m³)'],
   [28, '厚度|(m)'], [29, '宽|(m)']].map(([i, t]) => head(i, t)).join('') + '</tr>';

data.forEach((line, n) => {
  const v = line ? line.split(' ') : [];
  const full = v.length > 1;
  const row = full
    ? [v[0], v[1], 'PE', ...v.slice(2, 16), '', '', '', ...v.slice(16), '0.00', '0.00']
    : [v[0] || '', ...Array(29).fill('')];
  html += `<tr class="r${n === 0 ? ' cur' : ''}"><th class="rn">${n + 5}</th>` + row.map((t, i) => {
    let k = i === 0 ? 'cn' : i === 2 ? 'pe' : i === 1 || i > 27 ? 'b' : widths[i] < 60 ? 'narrow' : 'num';
    if (t === '道路') k += ' road';
    if (t === '400.00') k += ' yel';
    if (n === 0 && i === CURRENT) k += ' active';
    return `<td class="${k}${mark(i)}">${t === '_' ? '' : t}</td>`;
  }).join('') + '</tr>';
});
document.getElementById('sheet-table').innerHTML = html;
```
